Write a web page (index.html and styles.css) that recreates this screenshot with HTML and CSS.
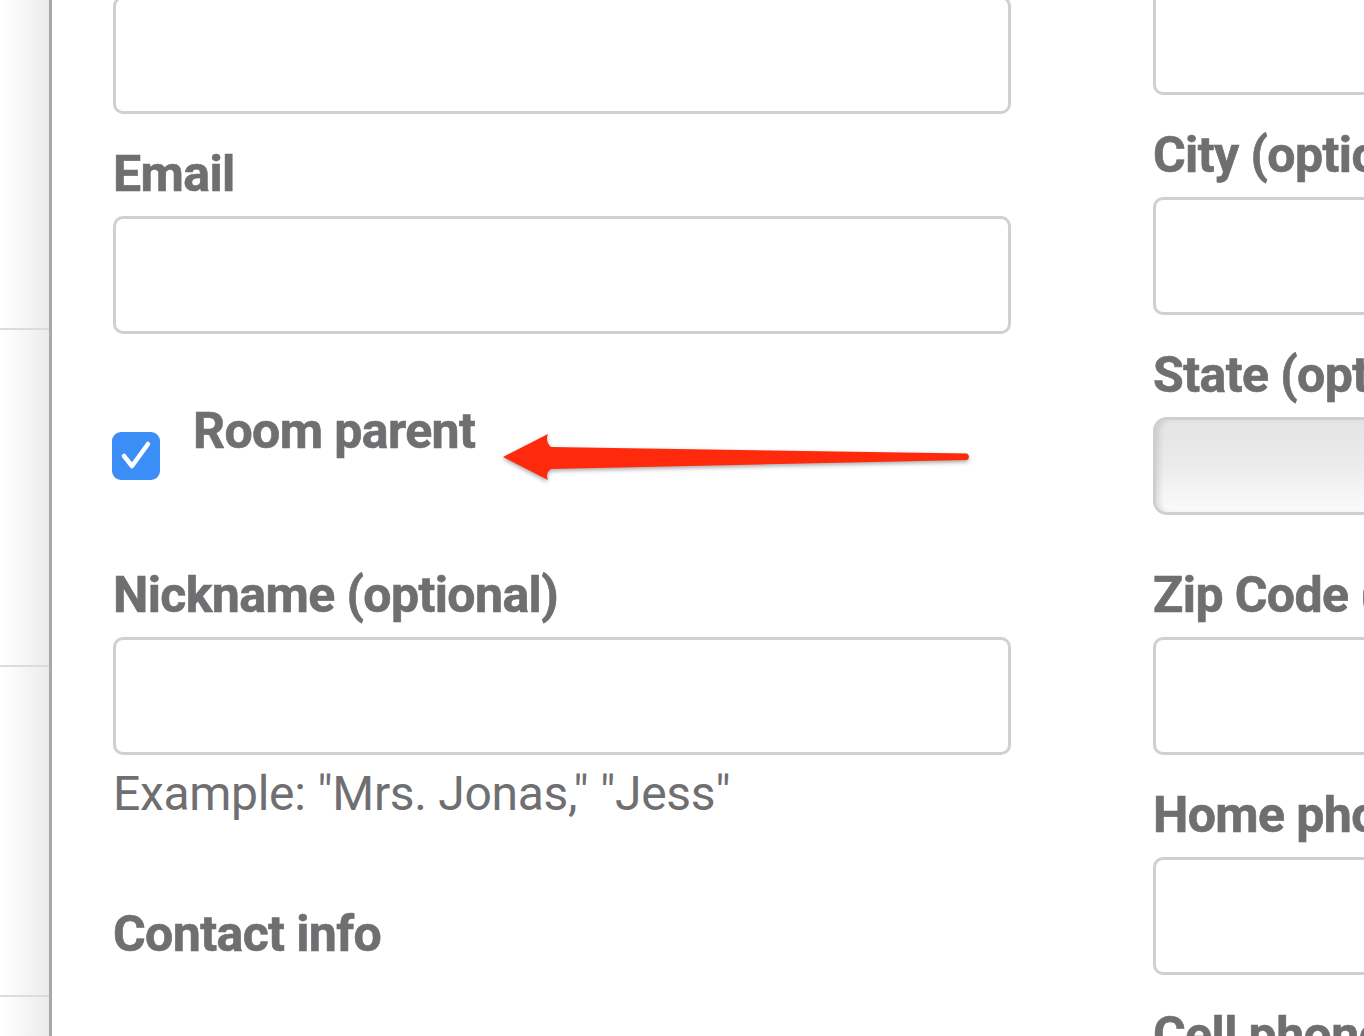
FILE: index.html
```html
<!DOCTYPE html>
<html lang="en">
<head>
<meta charset="utf-8">
<title>Room parent form</title>
<link rel="stylesheet" href="styles.css">
</head>
<body>
<aside class="sidebar">
  <div class="side-row r1"></div>
  <div class="side-row r2"></div>
  <div class="side-row r3"></div>
</aside>
<main class="main">
  <section class="col-left">
    <input class="field first-left" type="text">
    <label class="label">Email</label>
    <input class="field" type="email">

    <div class="check-row">
      <span class="checkbox">
        <svg viewBox="0 0 48 48" width="48" height="48"><path d="M12 24 L20 34 L36 12" fill="none" stroke="#fff" stroke-width="4.5" stroke-linecap="round" stroke-linejoin="round"/></svg>
      </span>
      <span class="label check-label">Room parent</span>
    </div>

    <label class="label nick">Nickname (optional)</label>
    <input class="field" type="text">
    <p class="hint">Example: "Mrs. Jonas," "Jess"</p>

    <h3 class="label section">Contact info</h3>
  </section>

  <section class="col-right">
    <input class="field first-right" type="text">
    <label class="label">City (optional)</label>
    <input class="field" type="text">
    <label class="label">State (optional)</label>
    <div class="select"></div>
    <label class="label">Zip Code (optional)</label>
    <input class="field" type="text">
    <label class="label">Home phone (optional)</label>
    <input class="field" type="text">
    <label class="label">Cell phone (optional)</label>
  </section>

  <svg class="arrow" width="480" height="60" viewBox="495 430 480 60">
    <path d="M503 457 L548 434 Q545 442 551 447 L967 453.5 Q971 456.5 967 460 L551 469 Q545 473 548 480 Z" fill="#ff2a0c"/>
  </svg>
</main>
</body>
</html>
```

FILE: styles.css
```css
html, body {
  margin: 0;
  padding: 0;
  height: 1036px;
  overflow: hidden;
  background: #fff;
}

body {
  display: flex;
  font-family: Roboto, "Liberation Sans", sans-serif;
  color: #707073;
}

.sidebar {
  width: 49px;
  flex: none;
  height: 1036px;
  background: linear-gradient(to right, #ffffff 0%, #f6f6f6 50%, #ebebeb 100%);
  border-right: 3px solid #a9a9a9;
  display: flex;
  flex-direction: column;
}

.side-row {
  border-bottom: 2px solid #dcdcdc;
  flex: none;
}
.r1 { height: 328px; }
.r2 { height: 335px; }
.r3 { height: 328px; }

.main {
  position: relative;
  flex: 1;
  display: flex;
  padding-left: 61px;
  gap: 142px;
  overflow: hidden;
}

.col-left {
  width: 898px;
  flex: none;
  display: flex;
  flex-direction: column;
  margin-top: -4px;
}

.col-right {
  width: 400px;
  flex: none;
  display: flex;
  flex-direction: column;
  margin-top: -23px;
}

.field {
  display: block;
  box-sizing: border-box;
  width: 100%;
  height: 118px;
  margin: 0;
  padding: 0 20px;
  border: 3px solid #d0d0d0;
  border-radius: 10px;
  background: #fff;
  font-size: 40px;
  outline: none;
  flex: none;
}

.label {
  display: block;
  margin: 30px 0 12px;
  font-size: 50px;
  line-height: 60px;
  height: 60px;
  font-weight: 700;
  letter-spacing: -0.6px;
  white-space: nowrap;
  color: #6f6f72;
  -webkit-text-stroke: 0.6px #6f6f72;
}

.check-row {
  display: flex;
  align-items: flex-start;
  gap: 33px;
  margin-top: 67px;
  margin-left: -1px;
}

.checkbox {
  width: 48px;
  height: 48px;
  margin-top: 31px;
  border-radius: 9px;
  background: #3b8ef6;
  flex: none;
  display: block;
}
.checkbox svg { display: block; }

.check-label {
  margin: 0;
}

.nick {
  margin-top: 85px;
}

.hint {
  margin: 9px 0 0;
  font-size: 48px;
  line-height: 60px;
  letter-spacing: -0.3px;
  font-weight: 400;
  color: #6f6f72;
  white-space: nowrap;
}

.section {
  margin-top: 80px;
}

.select {
  box-sizing: border-box;
  height: 98px;
  margin-bottom: 20px;
  border: 3px solid #cfcfcf;
  border-radius: 14px;
  background: linear-gradient(to bottom, #e4e4e4 0%, #ececec 50%, #fbfbfb 100%);
  box-shadow: inset 6px 0 6px -3px rgba(0, 0, 0, 0.12);
  flex: none;
}

.arrow {
  position: absolute;
  left: 443px;
  top: 430px;
  filter: drop-shadow(0 2px 2px rgba(0, 0, 0, 0.35));
}
```
